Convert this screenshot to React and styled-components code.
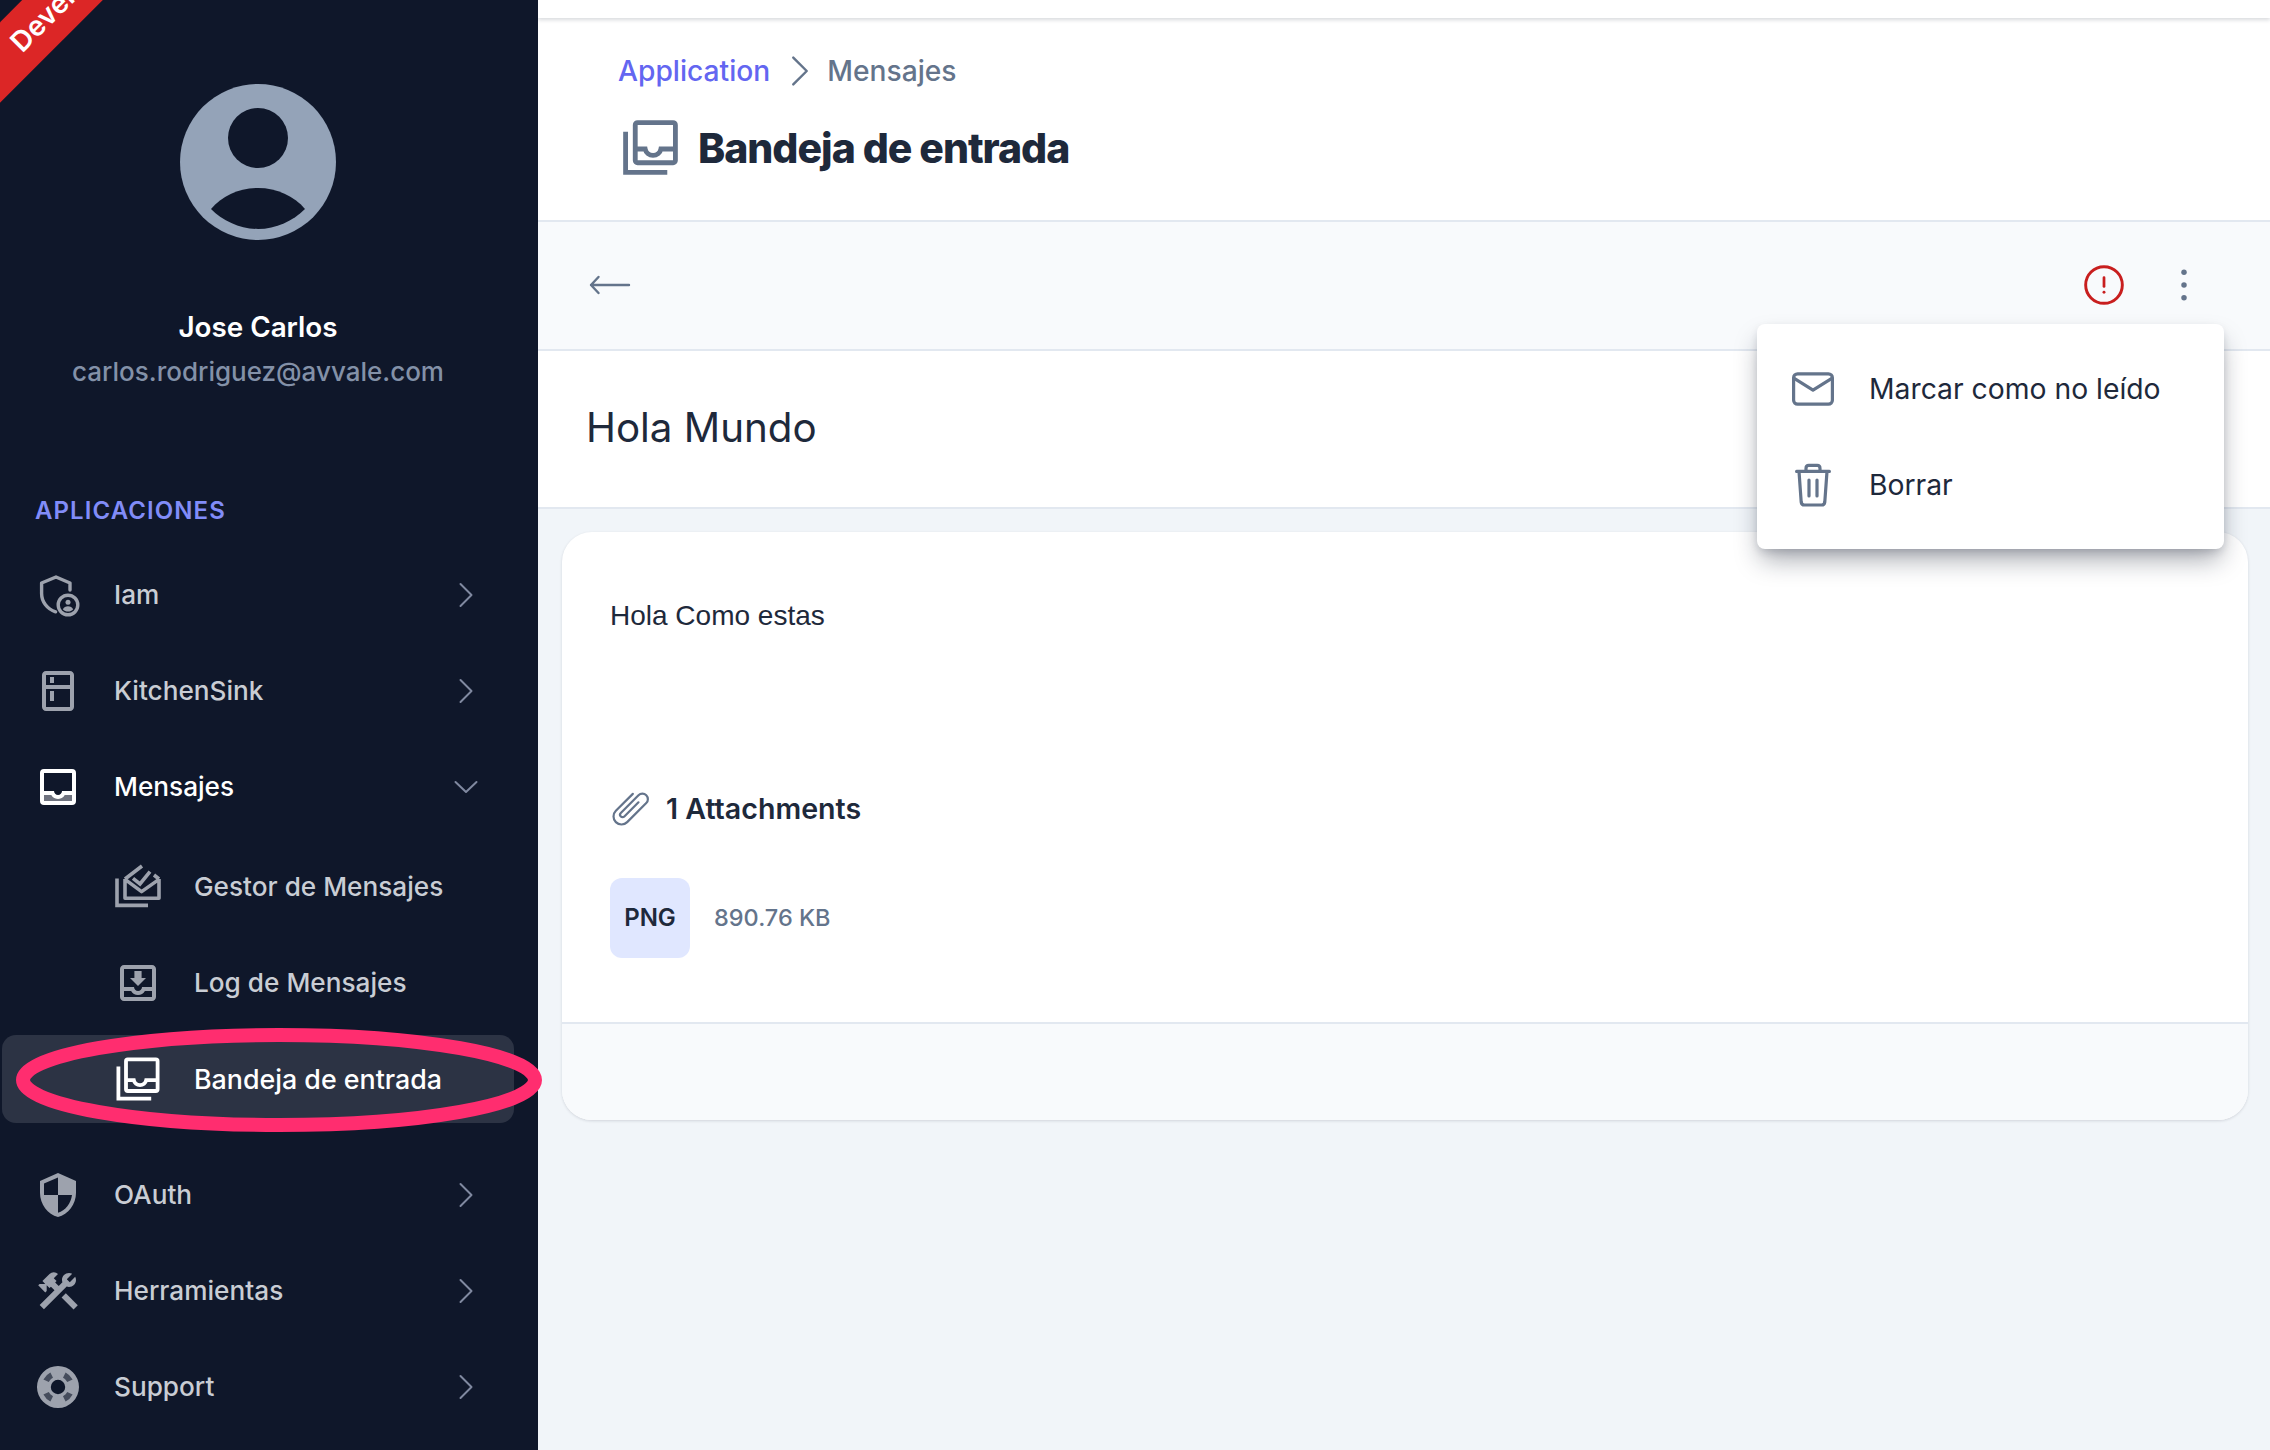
import React from 'react';
import styled, { createGlobalStyle } from 'styled-components';

const GlobalStyle = createGlobalStyle`
  html, body {
    margin: 0;
    height: 100%;
    overflow: hidden;
    background: #f1f5f9;
    font-family: Inter, "Noto Sans", sans-serif;
  }
  #root {
    height: 100%;
  }
`;

const ChevronRight = ({ size = 36 }) => (
  <svg width={size} height={size} viewBox="0 0 36 36" fill="none" stroke="currentColor" strokeWidth="2" strokeLinecap="round" strokeLinejoin="round">
    <path d="M12.5 7L23.5 18L12.5 29" />
  </svg>
);

const ChevronDown = () => (
  <svg width="36" height="36" viewBox="0 0 36 36" fill="none" stroke="currentColor" strokeWidth="2" strokeLinecap="round" strokeLinejoin="round">
    <path d="M7.5 13L18 23L28.5 13" />
  </svg>
);

const InboxIcon = () => (
  <svg width="48" height="48" viewBox="0 0 24 24" fill="currentColor">
    <path opacity="0.4" d="M5 19h14v-3h-3.54c-.7 1.19-1.97 2-3.45 2s-2.76-.81-3.45-2H5v3z" />
    <path d="M19 3H5a2 2 0 0 0-2 2v14a2 2 0 0 0 2 2h14a2 2 0 0 0 2-2V5a2 2 0 0 0-2-2zm0 16H5v-3h3.56c.69 1.19 1.97 2 3.45 2s2.75-.81 3.45-2H19v3zm0-5h-4.99c0 1.1-.9 2-2 2s-2-.9-2-2H5V5h14v9z" />
  </svg>
);

const IamIcon = () => (
  <svg width="48" height="48" viewBox="0 0 24 24" fill="none" stroke="currentColor" strokeWidth="1.7" strokeLinejoin="round">
    <path d="M18 9.5V6L11 3L3.8 6v5.2c0 4.2 2.8 7.8 7 9.2" strokeLinecap="round" />
    <circle cx="17" cy="17" r="4.9" />
    <circle cx="17" cy="15.6" r="1.25" fill="currentColor" stroke="none" />
    <path d="M14.4 19.1c.5-1 1.5-1.5 2.6-1.5s2.100.5 2.600 1.500c-.6.800-1.600 1.200-2.600 1.200s-2-.4-2.600-1.200z" fill="currentColor" stroke="none" />
  </svg>
);

const KitchenIcon = () => (
  <svg width="48" height="48" viewBox="0 0 24 24" fill="currentColor">
    <path d="M18 2.010L6 2c-1.100 0-2 .89-2 2v16c0 1.100.9 2 2 2h12c1.100 0 2-.9 2-2V4c0-1.110-.9-1.990-2-1.990zM18 20H6v-9.020h12V20zm0-11H6V4h12v5zM8 5h2v3H8zm0 7h2v5H8z" />
  </svg>
);

const ShieldIcon = () => (
  <svg width="48" height="48" viewBox="0 0 24 24" fill="currentColor">
    <path d="M12 1L3 5v6c0 5.550 3.840 10.740 9 12 5.160-1.260 9-6.450 9-12V5l-9-4zm0 10.990h7c-.53 4.120-3.280 7.790-7 8.940V12H5V6.300l7-3.110v8.800z" />
  </svg>
);

const ToolsIcon = () => (
  <svg width="48" height="48" viewBox="0 0 24 24" fill="currentColor">
    <path d="M13.780 15.300l6 6 2.110-2.160-5.990-5.990-2.120 2.150z" />
    <path d="M17.500 10c1.930 0 3.500-1.570 3.500-3.500 0-.58-.16-1.120-.41-1.600l-2.700 2.700-1.490-1.490 2.700-2.700c-.48-.25-1.020-.41-1.600-.41-1.930 0-3.500 1.570-3.500 3.500 0 .41.08.8.21 1.160l-1.850 1.850-1.780-1.780.71-.71-1.410-1.410L12 3.490a3 3 0 0 0-4.240 0L4.220 7.030l1.410 1.410H2.810l-.71.71 3.540 3.540.71-.71V9.150l1.410 1.410.71-.71 1.780 1.780-7.410 7.410 2.120 2.120L16.340 9.790c.36.13.75.21 1.160.21z" />
  </svg>
);

const SupportIcon = () => (
  <svg width="48" height="48" viewBox="0 0 24 24" fill="currentColor">
    <path d="M12 1.500a10.500 10.500 0 1 0 0 21 10.500 10.500 0 0 0 0-21zm0 14.100a3.600 3.600 0 1 1 0-7.200 3.600 3.600 0 0 1 0 7.200z" fillRule="evenodd" />
    <path fill="#0f172a" opacity="0.62" d="M8.200 4.700a8.300 8.300 0 0 0-3.500 3.500l2.700 1.300c.5-.9 1.200-1.600 2.100-2.100L8.200 4.700zM15.800 4.700l-1.300 2.700c.9.5 1.600 1.200 2.100 2.100l2.700-1.300a8.300 8.300 0 0 0-3.500-3.500zM4.700 15.800a8.300 8.300 0 0 0 3.500 3.500l1.300-2.700c-.9-.5-1.600-1.200-2.100-2.100l-2.700 1.300zM16.600 14.500c-.5.9-1.200 1.600-2.100 2.100l1.300 2.700a8.300 8.300 0 0 0 3.500-3.500l-2.700-1.300z" />
  </svg>
);

const GestorIcon = () => (
  <svg width="48" height="48" viewBox="0 0 24 24" fill="none" stroke="currentColor" strokeWidth="1.800">
    <path d="M1.500 7.700V21.200H17" />
    <path d="M5.500 8V17.600H22.500V8M5.500 8.200L13.800 14.300L22.500 8.200" strokeLinejoin="round" />
    <path d="M5.500 8L14 1.500M20 6L22.500 8M9.500 7.700L13 10.500L18 4.300" />
  </svg>
);

const LogIcon = () => (
  <svg width="48" height="48" viewBox="0 0 24 24" fill="currentColor">
    <path d="M19 3H5c-1.100 0-2 .9-2 2v14c0 1.100.9 2 2 2h14c1.100 0 2-.9 2-2V5c0-1.100-.9-2-2-2zm0 16H5v-3h3.560c.69 1.190 1.970 2 3.450 2s2.750-.81 3.450-2H19v3zm0-5h-4.990c0 1.100-.9 2-2 2s-2-.9-2-2H5V5h14v9z" />
    <path d="M16 9.500h-2.200V6h-3.600v3.500H8l4 4 4-4z" />
  </svg>
);

const StackedInboxIcon = ({ size = 48 }) => (
  <svg width={size} height={size} viewBox="0 0 24 24" fill="none" stroke="currentColor" strokeWidth="1.900">
    <rect x="6" y="2.200" width="15.800" height="15.800" rx="0.900" />
    <path d="M2.200 5.800V21.800H18.600" />
    <path d="M6 12.600h3.900c.3 1.500 1.600 2.500 3.100 2.500s2.800-1 3.100-2.500h5.700" />
  </svg>
);

const MailIcon = () => (
  <svg width="48" height="48" viewBox="0 0 24 24" fill="none" stroke="currentColor" strokeWidth="1.600" strokeLinecap="round" strokeLinejoin="round">
    <rect x="2.300" y="4.400" width="19.400" height="15.200" rx="2" />
    <path d="M2.600 6.700L12 12.600l9.400-5.900" />
  </svg>
);

const TrashIcon = () => (
  <svg width="48" height="48" viewBox="0 0 24 24" fill="none" stroke="currentColor" strokeWidth="1.600" strokeLinecap="round" strokeLinejoin="round">
    <path d="M3.800 5.200h16.400M5 5.200l1.100 15.300c.1.9.7 1.500 1.600 1.500h8.600c.9 0 1.500-.6 1.600-1.500L19 5.200" />
    <path d="M8.500 5V3.700c0-.9.6-1.500 1.400-1.500h4.200c.8 0 1.400.6 1.400 1.500V5M10 9.500v8M14 9.500v8" />
  </svg>
);

const AlertIcon = () => (
  <svg width="44" height="44" viewBox="0 0 24 24" fill="none" stroke="currentColor" strokeLinecap="round">
    <circle cx="12" cy="12" r="10" strokeWidth="1.600" />
    <path d="M12 8v4.800" strokeWidth="1.500" />
    <circle cx="12" cy="16" r="0.800" fill="currentColor" stroke="none" />
  </svg>
);

const DotsIcon = () => (
  <svg width="44" height="44" viewBox="0 0 24 24" fill="currentColor">
    <circle cx="12" cy="5" r="1.500" />
    <circle cx="12" cy="12" r="1.500" />
    <circle cx="12" cy="19" r="1.500" />
  </svg>
);

const BackIcon = () => (
  <svg width="44" height="44" viewBox="0 0 44 44" fill="none" stroke="currentColor" strokeWidth="2.400" strokeLinecap="round" strokeLinejoin="round">
    <path d="M41 22H3M10.500 14L3 22l7.500 8" />
  </svg>
);

const ClipIcon = () => (
  <svg width="40" height="40" viewBox="2 2 20 20" fill="none" stroke="currentColor" strokeWidth="1.100" strokeLinecap="round" strokeLinejoin="round">
    <path transform="rotate(45 12 12)" d="M8 6v12a4 4 0 0 0 8 0V4.500a2.750 2.750 0 0 0-5.500 0V17a1.250 1.250 0 0 0 2.500 0V7" />
  </svg>
);

const AvatarIcon = () => (
  <svg width="156" height="156" viewBox="0 0 156 156">
    <circle cx="78" cy="78" r="78" fill="#94a3b8" />
    <circle cx="78" cy="54" r="30" fill="#0f172a" />
    <path d="M31 125c11-13 28-21 47-21s36 8 47 21c-12 12-29 20-47 20s-35-8-47-20z" fill="#0f172a" />
  </svg>
);

const navTop = [
  { label: 'Iam', icon: <IamIcon /> },
  { label: 'KitchenSink', icon: <KitchenIcon /> },
];

const navSub = [
  { label: 'Gestor de Mensajes', icon: <GestorIcon /> },
  { label: 'Log de Mensajes', icon: <LogIcon /> },
  { label: 'Bandeja de entrada', icon: <StackedInboxIcon />, active: true },
];

const navBottom = [
  { label: 'OAuth', icon: <ShieldIcon /> },
  { label: 'Herramientas', icon: <ToolsIcon /> },
  { label: 'Support', icon: <SupportIcon /> },
];

function App() {
  return (
    <Page>
      <GlobalStyle />
      <Sidebar>
        <Ribbon>Development</Ribbon>
        <UserBlock>
          <AvatarIcon />
          <UserName>Jose Carlos</UserName>
          <UserEmail>carlos.rodriguez@avvale.com</UserEmail>
        </UserBlock>
        <SectionLabel>APLICACIONES</SectionLabel>
        <Nav>
          {navTop.map((item) => (
            <NavRow key={item.label}>
              <NavIcon>{item.icon}</NavIcon>
              <NavLabel>{item.label}</NavLabel>
              <Chevron><ChevronRight /></Chevron>
            </NavRow>
          ))}
          <NavRow $open>
            <NavIcon $open><InboxIcon /></NavIcon>
            <NavLabel>Mensajes</NavLabel>
            <Chevron><ChevronDown /></Chevron>
          </NavRow>
          <SubNav>
            {navSub.map((item) => (
              <SubRow key={item.label} $active={item.active}>
                <SubIcon $active={item.active}>{item.icon}</SubIcon>
                <NavLabel $active={item.active}>{item.label}</NavLabel>
                {item.active && (
                  <Highlight viewBox="0 0 528 106" width="528" height="106">
                    <ellipse cx="264" cy="53" rx="256" ry="45" fill="none" stroke="#ff2d6f" strokeWidth="14" />
                  </Highlight>
                )}
              </SubRow>
            ))}
          </SubNav>
          <BottomGroup>
            {navBottom.map((item) => (
              <NavRow key={item.label}>
                <NavIcon>{item.icon}</NavIcon>
                <NavLabel>{item.label}</NavLabel>
                <Chevron><ChevronRight /></Chevron>
              </NavRow>
            ))}
          </BottomGroup>
        </Nav>
      </Sidebar>

      <Main>
        <TopStrip />
        <Header>
          <Breadcrumb>
            <CrumbLink>Application</CrumbLink>
            <CrumbChevron><ChevronRight size={44} /></CrumbChevron>
            <CrumbCurrent>Mensajes</CrumbCurrent>
          </Breadcrumb>
          <TitleRow>
            <TitleIcon><StackedInboxIcon size={61} /></TitleIcon>
            <Title>Bandeja de entrada</Title>
          </TitleRow>
        </Header>

        <Toolbar>
          <BackButton><BackIcon /></BackButton>
          <ToolbarActions>
            <AlertButton><AlertIcon /></AlertButton>
            <DotsButton><DotsIcon /></DotsButton>
          </ToolbarActions>
        </Toolbar>

        <SubjectRow>
          <Subject>Hola Mundo</Subject>
        </SubjectRow>

        <Content>
          <Card>
            <CardBody>
              <MessageText>Hola Como estas</MessageText>
              <AttachmentsHeader>
                <ClipWrap><ClipIcon /></ClipWrap>
                <AttachmentsTitle>1 Attachments</AttachmentsTitle>
              </AttachmentsHeader>
              <AttachmentRow>
                <FileBadge>PNG</FileBadge>
                <FileSize>890.76 KB</FileSize>
              </AttachmentRow>
            </CardBody>
            <CardFooter />
          </Card>
        </Content>

        <Menu>
          <MenuItem>
            <MenuIcon><MailIcon /></MenuIcon>
            <span>Marcar como no leído</span>
          </MenuItem>
          <MenuItem>
            <MenuIcon><TrashIcon /></MenuIcon>
            <span>Borrar</span>
          </MenuItem>
        </Menu>
      </Main>
    </Page>
  );
}

const Page = styled.div`
  display: flex;
  height: 100%;
  overflow: hidden;
`;

const Sidebar = styled.aside`
  position: relative;
  z-index: 1;
  width: 538px;
  flex-shrink: 0;
  height: 100%;
  background: #0f172a;
  color: #fff;
`;

const Ribbon = styled.div`
  position: absolute;
  left: -71px;
  top: -45px;
  width: 300px;
  height: 57px;
  line-height: 57px;
  text-align: center;
  transform: rotate(-45deg);
  background: #dc2626;
  color: #fff;
  font-size: 28px;
  font-weight: 600;
`;

const UserBlock = styled.div`
  display: flex;
  flex-direction: column;
  align-items: center;
  padding-top: 84px;
  width: 516px;
`;

const UserName = styled.div`
  margin-top: 70px;
  font-size: 27.800px;
  line-height: 34px;
  font-weight: 600;
`;

const UserEmail = styled.div`
  margin-top: 11px;
  font-size: 26px;
  line-height: 34px;
  font-weight: 500;
  color: #8391a8;
`;

const SectionLabel = styled.div`
  margin: 107px 0 0 35px;
  font-size: 24px;
  line-height: 30px;
  font-weight: 600;
  letter-spacing: 0.045em;
  color: #818cf8;
`;

const Nav = styled.nav`
  display: flex;
  flex-direction: column;
  gap: 8px;
  margin-top: 24.500px;
`;

const NavRow = styled.div`
  display: flex;
  align-items: center;
  height: 88px;
  padding: 0 54px 0 34px;
  color: ${(p) => (p.$open ? '#fff' : '#c9cdd4')};
`;

const NavIcon = styled.span`
  display: flex;
  width: 48px;
  height: 48px;
  color: ${(p) => (p.$open ? '#fff' : '#9da2ad')};
`;

const NavLabel = styled.span`
  flex: 1;
  margin-left: 32px;
  font-size: ${(p) => (p.$active ? '26.800px' : '26.200px')};
  font-weight: 500;
`;

const Chevron = styled.span`
  display: flex;
  color: #8089a0;
`;

const SubNav = styled.div`
  display: flex;
  flex-direction: column;
  gap: 8px;
  margin-top: 4px;
`;

const SubRow = styled.div`
  position: relative;
  display: flex;
  align-items: center;
  height: 88px;
  margin: 0 24px 0 2px;
  padding-left: 112px;
  border-radius: 14px;
  background: ${(p) => (p.$active ? '#2c3344' : 'transparent')};
  color: ${(p) => (p.$active ? '#fff' : '#c9cdd4')};
`;

const SubIcon = styled.span`
  display: flex;
  color: ${(p) => (p.$active ? '#fff' : '#9da2ad')};
`;

const Highlight = styled.svg`
  position: absolute;
  left: 13px;
  top: -8px;
  overflow: visible;
  pointer-events: none;
`;

const BottomGroup = styled.div`
  display: flex;
  flex-direction: column;
  gap: 8px;
  margin-top: 20px;
`;

const Main = styled.main`
  position: relative;
  flex: 1;
  display: flex;
  flex-direction: column;
  min-width: 0;
  background: #f1f5f9;
`;

const TopStrip = styled.div`
  position: relative;
  height: 18px;
  background: #fff;
  box-shadow: 0 2px 4px rgba(15, 23, 42, 0.16);
`;

const Header = styled.header`
  display: flex;
  flex-direction: column;
  height: 203.500px;
  padding: 36px 0 0 80px;
  box-sizing: border-box;
  background: #fff;
  border-bottom: 2px solid #e2e8f0;
`;

const Breadcrumb = styled.div`
  display: flex;
  align-items: center;
  height: 34px;
  font-size: 28.200px;
  font-weight: 500;
`;

const CrumbLink = styled.span`
  color: #6366f1;
`;

const CrumbChevron = styled.span`
  display: flex;
  margin: 0 5px 0 8px;
  color: #64748b;
`;

const CrumbCurrent = styled.span`
  color: #64748b;
`;

const TitleRow = styled.div`
  display: flex;
  align-items: center;
  margin: 29px 0 0 2px;
`;

const TitleIcon = styled.span`
  display: flex;
  color: #64748b;
`;

const Title = styled.h1`
  margin: 0 0 0 17px;
  font-size: 41px;
  line-height: 52px;
  font-weight: 800;
  letter-spacing: -0.025em;
  color: #1e293b;
`;

const Toolbar = styled.div`
  display: flex;
  align-items: center;
  justify-content: space-between;
  height: 129px;
  padding: 0 64px 0 50px;
  box-sizing: border-box;
  background: #f8fafc;
  border-bottom: 2px solid #e2e8f0;
`;

const BackButton = styled.span`
  display: flex;
  color: #64748b;
`;

const ToolbarActions = styled.div`
  display: flex;
  align-items: center;
  gap: 36px;
`;

const AlertButton = styled.span`
  display: flex;
  color: #c81e1e;
`;

const DotsButton = styled.span`
  display: flex;
  color: #64748b;
`;

const SubjectRow = styled.div`
  display: flex;
  align-items: center;
  height: 158px;
  padding: 0 0 2px 48px;
  box-sizing: border-box;
  background: #fff;
  border-bottom: 2px solid #e2e8f0;
`;

const Subject = styled.div`
  font-size: 40.300px;
  font-weight: 400;
  color: #1e293b;
`;

const Content = styled.div`
  padding: 23px 22px 0 24px;
`;

const Card = styled.section`
  height: 588px;
  display: flex;
  flex-direction: column;
  border-radius: 30px;
  overflow: hidden;
  background: #fff;
  box-shadow: 0 1px 3px rgba(15, 23, 42, 0.14);
`;

const CardBody = styled.div`
  flex: 1;
  padding: 66px 48px 0;
`;

const MessageText = styled.div`
  font-family: "Liberation Sans", Arial, sans-serif;
  font-size: 28px;
  line-height: 36px;
  color: #1e293b;
`;

const AttachmentsHeader = styled.div`
  display: flex;
  align-items: center;
  margin-top: 154.500px;
`;

const ClipWrap = styled.span`
  display: flex;
  color: #64748b;
`;

const AttachmentsTitle = styled.div`
  margin-left: 16px;
  font-size: 28.600px;
  font-weight: 600;
  color: #1e293b;
`;

const AttachmentRow = styled.div`
  display: flex;
  align-items: center;
  margin-top: 49.500px;
`;

const FileBadge = styled.div`
  display: flex;
  align-items: center;
  justify-content: center;
  width: 80px;
  height: 80px;
  border-radius: 12px;
  background: #e0e7ff;
  font-size: 24px;
  font-weight: 600;
  color: #1e293b;
`;

const FileSize = styled.div`
  margin-left: 24px;
  font-size: 23.500px;
  font-weight: 500;
  color: #64748b;
`;

const CardFooter = styled.div`
  height: 96px;
  background: #f8fafc;
  border-top: 2px solid #e2e8f0;
`;

const Menu = styled.div`
  position: absolute;
  top: 324px;
  right: 46px;
  width: 467px;
  height: 225px;
  padding: 17px 0 0;
  box-sizing: border-box;
  border-radius: 8px;
  background: #fff;
  box-shadow: 0 14px 26px -4px rgba(15, 23, 42, 0.38), 0 4px 10px -2px rgba(15, 23, 42, 0.18);
`;

const MenuItem = styled.div`
  display: flex;
  align-items: center;
  height: 96px;
  padding-left: 32px;
  font-size: 28.300px;
  color: #1e293b;
`;

const MenuIcon = styled.span`
  display: flex;
  margin-right: 32px;
  color: #64748b;
`;

export default App;
